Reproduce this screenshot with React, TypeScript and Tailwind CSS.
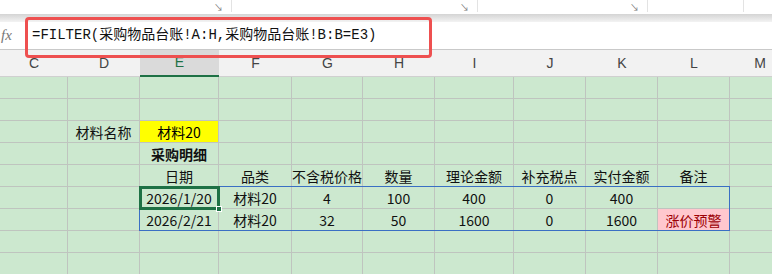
import React from 'react';

const COLS = ['C', 'D', 'E', 'F', 'G', 'H', 'I', 'J', 'K', 'L', 'M'];

type Cell = { text?: string; bold?: boolean; fill?: 'yellow' | 'pink' };

// rows below the column header, one entry per column C..M
const ROWS: Cell[][] = [
  [],
  [],
  [{}, { text: '材料名称' }, { text: '材料20', fill: 'yellow' }],
  [{}, {}, { text: '采购明细', bold: true }],
  [{}, {}, { text: '日期' }, { text: '品类' }, { text: '不含税价格' }, { text: '数量' }, { text: '理论金额' }, { text: '补充税点' }, { text: '实付金额' }, { text: '备注' }],
  [{}, {}, { text: '2026/1/20' }, { text: '材料20' }, { text: '4' }, { text: '100' }, { text: '400' }, { text: '0' }, { text: '400' }, {}],
  [{}, {}, { text: '2026/2/21' }, { text: '材料20' }, { text: '32' }, { text: '50' }, { text: '1600' }, { text: '0' }, { text: '1600' }, { text: '涨价预警', fill: 'pink' }],
  [],
  [],
];

const Launcher = () => <span className="text-[9px] leading-none text-[#777]">↘</span>;

const App: React.FC = () => {
  return (
    <div className="relative w-[772px] h-[274px] overflow-hidden bg-[#cce8cf] font-['Noto_Sans_CJK_SC','Noto_Sans',sans-serif]">
      {/* ribbon bottom edge */}
      <div className="flex h-[14px] bg-white">
        <div className="w-[232px] h-[12px] flex items-end justify-end pr-[8px] border-r border-[#e3e3e3]"><Launcher /></div>
        <div className="w-[246px] h-[12px] flex items-end justify-end pr-[8px] border-r border-[#e3e3e3]"><Launcher /></div>
        <div className="w-[170px] h-[12px] flex items-end justify-end pr-[8px] border-r border-[#e3e3e3]"><Launcher /></div>
        <div className="w-[96px] h-[12px] border-r border-[#e3e3e3]" />
      </div>
      <div className="h-[8px] bg-gradient-to-b from-[#d4d4d4] to-[#f3f3f3]" />

      {/* formula bar */}
      <div className="flex items-center h-[28px] bg-white border-b border-[#c9c9c9]">
        <span className="ml-[1px] w-[31px] font-['Liberation_Serif',serif] italic text-[15px] text-[#777]">fx</span>
        <span className="text-[14px] text-[#111] font-['Liberation_Mono','Noto_Sans_CJK_SC',monospace] whitespace-nowrap">
          =FILTER(采购物品台账!A:H,采购物品台账!B:B=E3)
        </span>
      </div>

      {/* sheet */}
      <div className="grid grid-cols-[68px_72px_79px_73px_71px_72px_79px_72px_72px_72px_60px]">
        {COLS.map((c) => (
          <div
            key={c}
            className={`h-[27px] flex items-center justify-center text-[14px] font-['Liberation_Sans',sans-serif] ${
              c === 'E' ? 'bg-[#dadada] text-[#1e7145] border-b-2 border-[#1e7145]' : 'bg-[#f2f2f2] text-[#444] border-b border-[#d0d0d0]'
            }`}
          >
            {c}
          </div>
        ))}
        {ROWS.map((row, r) =>
          COLS.map((c, ci) => {
            const cell = row[ci] || {};
            const bg = cell.fill === 'yellow' ? 'bg-[#ffff00]' : cell.fill === 'pink' ? 'bg-[#ffc7ce] text-[#9c0006]' : 'text-[#111]';
            return (
              <div
                key={`${r}-${c}`}
                className={`h-[22px] flex items-center justify-center whitespace-nowrap text-[14px] leading-none border-r border-b border-[#bfc4bf] ${bg} ${cell.bold ? 'font-bold' : ''}`}
              >
                {cell.text}
              </div>
            );
          })
        )}
      </div>

      {/* data range outline */}
      <div className="absolute left-[139px] top-[186px] w-[591px] h-[45px] border border-[#3a6fc4] pointer-events-none" />
      {/* active cell */}
      <div className="absolute left-[139px] top-[186px] w-[81px] h-[24px] border-[3px] border-[#1e7145] pointer-events-none" />
      <div className="absolute left-[216px] top-[206px] w-[6px] h-[6px] bg-[#1e7145] border border-white" />

      {/* red annotation box */}
      <div className="absolute left-[25px] top-[17px] w-[407px] h-[41px] border-[3px] border-[#ee5050] rounded-[4px]" />
    </div>
  );
};

export default App;
